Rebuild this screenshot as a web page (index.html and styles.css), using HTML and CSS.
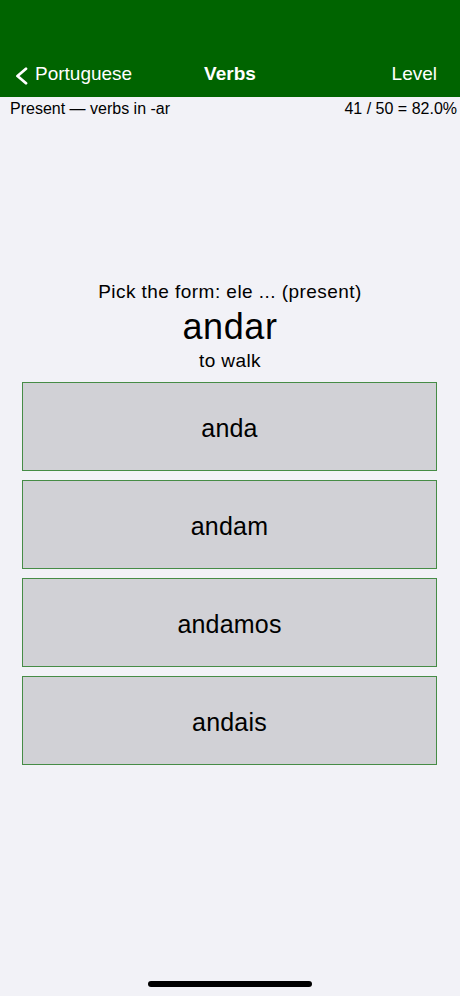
FILE: index.html
```html
<!DOCTYPE html>
<html>
<head>
    <title>Verbs</title>
    <meta charset="utf-8">
    <link rel="stylesheet" href="styles.css">
</head>
<body>
    <div class="page">
        <div class="header">
            <div class="nav">
                <a class="back">
                    <svg class="chevron" width="13" height="18" viewBox="0 0 13 18">
                        <path d="M11 1.8 L2.5 9 L11 16.2" fill="none" stroke="#fff" stroke-width="2.8" stroke-linecap="round" stroke-linejoin="round"/>
                    </svg>
                    <span>Portuguese</span>
                </a>
                <div class="title">Verbs</div>
                <a class="level">Level</a>
            </div>
        </div>

        <div class="info">
            <span>Present — verbs in -ar</span>
            <span>41 / 50 = 82.0%</span>
        </div>

        <div class="quiz">
            <div class="prompt">Pick the form: ele ... (present)</div>
            <div class="verb">andar</div>
            <div class="meaning">to walk</div>
            <div class="answers">
                <div class="answer">anda</div>
                <div class="answer">andam</div>
                <div class="answer">andamos</div>
                <div class="answer">andais</div>
            </div>
        </div>

        <div class="home-bar"></div>
    </div>
</body>
</html>
```

FILE: styles.css
```css
body {
    margin: 0;
    background: #f2f2f7;
    font-family: "Liberation Sans", Arial, sans-serif;
    color: #000;
}
.page {
    display: flex;
    flex-direction: column;
    min-height: 996px;
}
.header {
    background: #006400;
    height: 97px;
    display: flex;
    flex-direction: column;
    justify-content: flex-end;
}
.nav {
    box-sizing: border-box;
    height: 50px;
    padding: 4px 14px 0 14px;
    display: grid;
    grid-template-columns: 1fr auto 1fr;
    align-items: center;
    color: #fff;
    font-size: 19px;
}
.back {
    display: flex;
    align-items: center;
    gap: 7px;
    margin-left: 1px;
}
.chevron {
    display: block;
    margin-top: 4px;
}
.title {
    font-weight: bold;
}
.level {
    text-align: right;
    padding-right: 9px;
}
.info {
    display: flex;
    justify-content: space-between;
    padding: 2px 3px 0 10px;
    height: 20px;
    font-size: 16px;
    line-height: 20px;
}
.quiz {
    margin-top: 162px;
    display: flex;
    flex-direction: column;
    align-items: center;
    text-align: center;
}
.prompt {
    font-size: 19px;
    line-height: 22px;
    letter-spacing: 0.45px;
}
.verb {
    font-size: 36px;
    line-height: 42px;
    letter-spacing: 0.6px;
    margin-top: 3px;
}
.meaning {
    font-size: 19px;
    line-height: 22px;
    letter-spacing: 0.4px;
    margin-top: 2px;
}
.answers {
    align-self: stretch;
    margin: 10px 23px 0 22px;
    display: flex;
    flex-direction: column;
    gap: 9px;
}
.answer {
    box-sizing: border-box;
    height: 89px;
    padding-top: 3px;
    border: 1px solid #468c46;
    background: #d1d1d6;
    display: flex;
    align-items: center;
    justify-content: center;
    font-size: 25px;
    letter-spacing: 0.2px;
}
.home-bar {
    margin: auto auto 9px;
    width: 164px;
    height: 6px;
    border-radius: 3px;
    background: #000;
}
```
